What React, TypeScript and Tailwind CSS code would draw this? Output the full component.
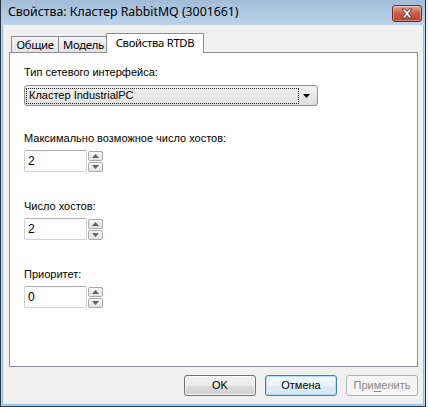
import React from "react";

function SpinBtn({ up }: { up?: boolean }) {
  return (
    <div className="w-[15px] h-[10px] border border-[#a7abb0] rounded-[2px] bg-linear-to-b from-[#f6f6f6] to-[#e2e2e2] flex items-center justify-center">
      <svg width="7" height="4" viewBox="0 0 7 4">
        {up ? (
          <path d="M3.5 0 L7 4 L0 4 Z" fill="#4d6185" />
        ) : (
          <path d="M0 0 L7 0 L3.5 4 Z" fill="#4d6185" />
        )}
      </svg>
    </div>
  );
}

function Spin({ value }: { value: string }) {
  return (
    <div className="flex items-start">
      <div className="w-[63px] h-[22px] border border-[#d0d3d8] border-t-[#abadb3] rounded-[2px] bg-white pl-[3px] flex items-center text-[12px] leading-none text-black">
        {value}
      </div>
      <div className="ml-[1px] mt-[1px] flex flex-col gap-[1px]">
        <SpinBtn up />
        <SpinBtn />
      </div>
    </div>
  );
}

export default function App() {
  return (
    <div className="w-[428px] h-[407px] bg-[#eef3f9] font-['Liberation_Sans',Arial,sans-serif] text-[11px] text-black">
      <div className="w-[426px] h-[407px] border-l border-r border-b border-[#27333f] bg-[#c3d8ee] px-[1px] pb-[1px] flex flex-col">
        {/* title bar */}
        <div className="h-[25px] -mx-[1px] bg-linear-to-b from-[#a2bcd9] to-[#bcd2ea] flex items-center pl-[7px] pr-[3px] shrink-0">
          <span className="font-['Noto_Sans',sans-serif] text-[12.3px] text-black leading-none">
            Свойства: Кластер RabbitMQ (3001661)
          </span>
          <div className="ml-auto w-[30px] h-[17px] mt-[1px] rounded-[3px] border border-[#6b2a22] bg-linear-to-b from-[#e7a595] via-[#cc5a45] to-[#b8412d] shadow-[inset_0_0_0_1px_rgba(255,255,255,0.35)] flex items-center justify-center">
            <svg width="14" height="11" viewBox="0 0 14 11">
              <path
                d="M2 1 L5 1 L7 3.5 L9 1 L12 1 L8.6 5.5 L12 10 L9 10 L7 7.5 L5 10 L2 10 L5.4 5.5 Z"
                fill="#ffffff"
                stroke="#4a3a3a"
                strokeWidth="0.9"
                strokeLinejoin="round"
              />
            </svg>
          </div>
        </div>
        {/* body */}
        <div className="flex-1 bg-[#f0f0f0] border-l border-r border-b border-[#8cbbe3] pt-[8px] pl-[6px] pr-[5px] flex flex-col">
          {/* tabs */}
          <div className="relative z-10 flex items-end h-[19px] pl-[2px] font-['Noto_Sans',sans-serif] text-[11.3px] tracking-[-0.3px]">
            <div className="w-[48px] h-[16px] border border-b-0 border-[#898c95] bg-linear-to-b from-[#f3f3f3] to-[#e3e3e3] flex items-center justify-center leading-none">
              Общие
            </div>
            <div className="-ml-px w-[51px] h-[16px] border border-b-0 border-[#898c95] bg-linear-to-b from-[#f3f3f3] to-[#e3e3e3] flex items-center justify-center leading-none">
              Модель
            </div>
            <div className="-ml-[3px] -mb-px w-[98px] h-[20px] border border-b-0 border-[#898c95] bg-white flex items-center justify-center leading-none pb-[2px]">
              Свойства RTDB
            </div>
          </div>
          {/* panel */}
          <div className="w-[409px] h-[315px] border border-[#898c95] bg-white pl-[14px] pt-[13px] flex flex-col">
            <div className="h-[13px] leading-[13px]">Тип сетевого интерфейса:</div>
            <div className="mt-[6px] w-[294px] h-[21px] border border-[#8e8f8f] rounded-[3px] bg-linear-to-b from-[#f2f2f2] to-[#e0e0e0] flex items-center pl-[1px] pr-[4px]">
              <div className="w-[273px] h-[16px] border border-dotted border-[#222] flex items-center pl-[2px] leading-none">
                Кластер IndustrialPC
              </div>
              <div className="flex-1 flex justify-center">
                <svg width="7" height="4" viewBox="0 0 7 4">
                  <path d="M0 0 L7 0 L3.5 4 Z" fill="#000" />
                </svg>
              </div>
            </div>
            <div className="mt-[26px] h-[13px] leading-[13px]">Максимально возможное число хостов:</div>
            <div className="mt-[5px]">
              <Spin value="2" />
            </div>
            <div className="mt-[28px] h-[13px] leading-[13px]">Число хостов:</div>
            <div className="mt-[5px]">
              <Spin value="2" />
            </div>
            <div className="mt-[28px] h-[13px] leading-[13px]">Приоритет:</div>
            <div className="mt-[5px]">
              <Spin value="0" />
            </div>
          </div>
          {/* buttons */}
          <div className="w-[409px] mt-[8px] flex justify-end gap-[9px]">
            <div className="w-[72px] h-[21px] rounded-[3px] border border-[#707070] bg-[linear-gradient(#f2f2f2_0%,#ebebeb_50%,#dddddd_50%,#cfcfcf_100%)] shadow-[inset_0_0_0_1px_rgba(255,255,255,0.7)] flex items-center justify-center">
              OK
            </div>
            <div className="w-[72px] h-[21px] rounded-[3px] border border-[#3c7fb1] bg-[linear-gradient(#f4f9fc_0%,#eaf3f9_50%,#e0ecf5_50%,#d5e5f1_100%)] shadow-[inset_0_0_0_1px_#b6def7] flex items-center justify-center">
              Отмена
            </div>
            <div className="w-[72px] h-[21px] rounded-[3px] border border-[#adb2b5] bg-[#f4f4f4] text-[#8a8a8a] flex items-center justify-center">
              <span>
                При<span className="underline underline-offset-2">м</span>енить
              </span>
            </div>
          </div>
        </div>
      </div>
    </div>
  );
}
